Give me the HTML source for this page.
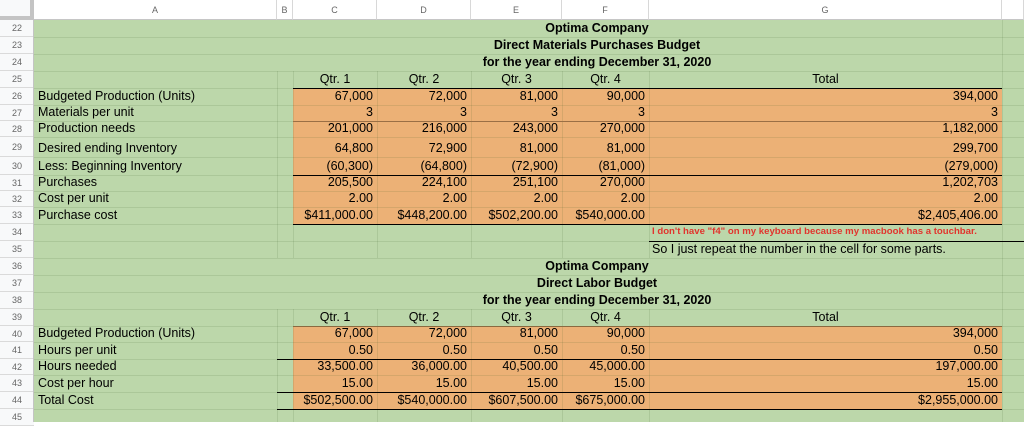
<!DOCTYPE html>
<html><head><meta charset="utf-8"><style>
*{margin:0;padding:0;box-sizing:border-box}
body{width:1024px;height:422px;overflow:hidden;background:#fff;font-family:"Liberation Sans",Arial,sans-serif;position:relative}
.a{position:absolute}
.hd{position:absolute;top:0;height:20px;background:#fff;border-right:1px solid #d8d8d8;border-bottom:1px solid #c6c6c6;font-size:9px;color:#666;text-align:center;line-height:20px}
.rn{position:absolute;left:0;width:34px;background:#f8f9fa;border-bottom:1px solid #dadada;font-size:9px;color:#666;text-align:center;display:flex;align-items:center;justify-content:center}
.row{position:absolute;left:0;width:1024px}
.c{position:absolute;top:0;bottom:0;font-size:12.5px;color:#000;white-space:nowrap;display:flex;align-items:flex-end;padding-bottom:1px;line-height:15px}
.A{left:38px;width:240px}
.C{left:293px;width:84px}
.D{left:377px;width:94px}
.E{left:471px;width:91px}
.F{left:562px;width:87px}
.G{left:649px;width:353px}
.r{justify-content:flex-end;padding-right:4px}
.m{justify-content:center}
.t{left:400px;width:394px;justify-content:center;font-weight:bold}
.vl{position:absolute;width:1px;background:rgba(60,90,40,0.13)}
.hl{position:absolute;left:34px;width:990px;height:1px;background:rgba(60,90,40,0.13)}
.bl{position:absolute;height:1px;background:#000}
</style></head><body>
<!-- backgrounds -->
<div class="a" style="left:34px;top:20px;width:990px;height:402px;background:#bcd7aa"></div>
<div class="a" style="left:293px;top:88px;width:709px;height:136px;background:#ecb176"></div>
<div class="a" style="left:293px;top:326px;width:709px;height:83px;background:#ecb176"></div>
<!-- horizontal gridlines -->
<div class="hl" style="top:37px"></div><div class="hl" style="top:54px"></div><div class="hl" style="top:71px"></div><div class="hl" style="top:88px"></div><div class="hl" style="top:105px"></div><div class="hl" style="top:121px"></div><div class="hl" style="top:137px"></div><div class="hl" style="top:157px"></div><div class="hl" style="top:175px"></div><div class="hl" style="top:191px"></div><div class="hl" style="top:207px"></div><div class="hl" style="top:224px"></div><div class="hl" style="top:241px"></div><div class="hl" style="top:258px"></div><div class="hl" style="top:275px"></div><div class="hl" style="top:292px"></div><div class="hl" style="top:309px"></div><div class="hl" style="top:326px"></div><div class="hl" style="top:342px"></div><div class="hl" style="top:359px"></div><div class="hl" style="top:375px"></div><div class="hl" style="top:392px"></div><div class="hl" style="top:409px"></div>
<!-- vertical gridlines -->
<div class="vl" style="left:277px;top:71px;height:187px"></div><div class="vl" style="left:277px;top:309px;height:113px"></div>
<div class="vl" style="left:293px;top:71px;height:187px"></div><div class="vl" style="left:293px;top:309px;height:113px"></div>
<div class="vl" style="left:377px;top:71px;height:187px"></div><div class="vl" style="left:377px;top:309px;height:113px"></div>
<div class="vl" style="left:471px;top:71px;height:187px"></div><div class="vl" style="left:471px;top:309px;height:113px"></div>
<div class="vl" style="left:562px;top:71px;height:187px"></div><div class="vl" style="left:562px;top:309px;height:113px"></div>
<div class="vl" style="left:649px;top:71px;height:187px"></div><div class="vl" style="left:649px;top:309px;height:113px"></div>
<div class="vl" style="left:1002px;top:20px;height:402px"></div>
<!-- borders -->
<div class="bl" style="left:293px;top:88px;width:709px"></div>
<div class="bl" style="left:293px;top:121px;width:709px;background:#9a6f45"></div>
<div class="bl" style="left:293px;top:175px;width:709px"></div>
<div class="bl" style="left:293px;top:224px;width:709px"></div>
<div class="bl" style="left:649px;top:241px;width:375px"></div>
<div class="bl" style="left:293px;top:326px;width:709px;background:#8a6a40"></div>
<div class="bl" style="left:277px;top:359px;width:725px"></div>
<div class="bl" style="left:277px;top:392px;width:725px"></div>
<div class="bl" style="left:277px;top:409px;width:725px"></div>
<!-- header -->
<div class="hd" style="left:0;width:34px;background:#f8f9fa;border-right:4px solid #c4c4c4;border-bottom:4px solid #c4c4c4"></div>
<div class="hd" style="left:34px;width:243px">A</div>
<div class="hd" style="left:277px;width:16px">B</div>
<div class="hd" style="left:293px;width:84px">C</div>
<div class="hd" style="left:377px;width:94px">D</div>
<div class="hd" style="left:471px;width:91px">E</div>
<div class="hd" style="left:562px;width:87px">F</div>
<div class="hd" style="left:649px;width:353px">G</div>
<div class="hd" style="left:1002px;width:22px"></div>
<!-- row numbers -->
<div class="rn" style="top:20px;height:17px">22</div><div class="rn" style="top:37px;height:17px">23</div><div class="rn" style="top:54px;height:17px">24</div><div class="rn" style="top:71px;height:17px">25</div><div class="rn" style="top:88px;height:17px">26</div><div class="rn" style="top:105px;height:16px">27</div><div class="rn" style="top:121px;height:16px">28</div><div class="rn" style="top:137px;height:20px">29</div><div class="rn" style="top:157px;height:18px">30</div><div class="rn" style="top:175px;height:16px">31</div><div class="rn" style="top:191px;height:16px">32</div><div class="rn" style="top:207px;height:17px">33</div><div class="rn" style="top:224px;height:17px">34</div><div class="rn" style="top:241px;height:17px">35</div><div class="rn" style="top:258px;height:17px">36</div><div class="rn" style="top:275px;height:17px">37</div><div class="rn" style="top:292px;height:17px">38</div><div class="rn" style="top:309px;height:17px">39</div><div class="rn" style="top:326px;height:16px">40</div><div class="rn" style="top:342px;height:17px">41</div><div class="rn" style="top:359px;height:16px">42</div><div class="rn" style="top:375px;height:17px">43</div><div class="rn" style="top:392px;height:17px">44</div><div class="rn" style="top:409px;height:17px">45</div>
<div class="a" style="left:33px;top:20px;width:1px;height:402px;background:#c4c4c4"></div>

<!-- Table 1 -->
<div class="row" style="top:20px;height:17px"><div class="c t">Optima Company</div></div>
<div class="row" style="top:37px;height:17px"><div class="c t">Direct Materials Purchases Budget</div></div>
<div class="row" style="top:54px;height:17px"><div class="c t">for the year ending December 31, 2020</div></div>
<div class="row" style="top:71px;height:17px"><div class="c C m">Qtr. 1</div><div class="c D m">Qtr. 2</div><div class="c E m">Qtr. 3</div><div class="c F m">Qtr. 4</div><div class="c G m">Total</div></div>
<div class="row" style="top:88px;height:17px"><div class="c A">Budgeted Production (Units)</div><div class="c C r">67,000</div><div class="c D r">72,000</div><div class="c E r">81,000</div><div class="c F r">90,000</div><div class="c G r">394,000</div></div>
<div class="row" style="top:105px;height:16px"><div class="c A">Materials per unit</div><div class="c C r">3</div><div class="c D r">3</div><div class="c E r">3</div><div class="c F r">3</div><div class="c G r">3</div></div>
<div class="row" style="top:121px;height:16px"><div class="c A">Production needs</div><div class="c C r">201,000</div><div class="c D r">216,000</div><div class="c E r">243,000</div><div class="c F r">270,000</div><div class="c G r">1,182,000</div></div>
<div class="row" style="top:137px;height:20px"><div class="c A">Desired ending Inventory</div><div class="c C r">64,800</div><div class="c D r">72,900</div><div class="c E r">81,000</div><div class="c F r">81,000</div><div class="c G r">299,700</div></div>
<div class="row" style="top:157px;height:18px"><div class="c A">Less: Beginning Inventory</div><div class="c C r">(60,300)</div><div class="c D r">(64,800)</div><div class="c E r">(72,900)</div><div class="c F r">(81,000)</div><div class="c G r">(279,000)</div></div>
<div class="row" style="top:175px;height:16px"><div class="c A">Purchases</div><div class="c C r">205,500</div><div class="c D r">224,100</div><div class="c E r">251,100</div><div class="c F r">270,000</div><div class="c G r">1,202,703</div></div>
<div class="row" style="top:191px;height:16px"><div class="c A">Cost per unit</div><div class="c C r">2.00</div><div class="c D r">2.00</div><div class="c E r">2.00</div><div class="c F r">2.00</div><div class="c G r">2.00</div></div>
<div class="row" style="top:207px;height:17px"><div class="c A">Purchase cost</div><div class="c C r">$411,000.00</div><div class="c D r">$448,200.00</div><div class="c E r">$502,200.00</div><div class="c F r">$540,000.00</div><div class="c G r">$2,405,406.00</div></div>
<div class="row" style="top:224px;height:17px"><div class="c" style="left:652px;font-size:9.6px;font-weight:bold;color:#e2342d;padding-bottom:2px">I don't have "f4" on my keyboard because my macbook has a touchbar.</div></div>
<div class="row" style="top:241px;height:17px"><div class="c" style="left:652px">So I just repeat the number in the cell for some parts.</div></div>

<!-- Table 2 -->
<div class="row" style="top:258px;height:17px"><div class="c t">Optima Company</div></div>
<div class="row" style="top:275px;height:17px"><div class="c t">Direct Labor Budget</div></div>
<div class="row" style="top:292px;height:17px"><div class="c t">for the year ending December 31, 2020</div></div>
<div class="row" style="top:309px;height:17px"><div class="c C m">Qtr. 1</div><div class="c D m">Qtr. 2</div><div class="c E m">Qtr. 3</div><div class="c F m">Qtr. 4</div><div class="c G m">Total</div></div>
<div class="row" style="top:326px;height:16px"><div class="c A">Budgeted Production (Units)</div><div class="c C r">67,000</div><div class="c D r">72,000</div><div class="c E r">81,000</div><div class="c F r">90,000</div><div class="c G r">394,000</div></div>
<div class="row" style="top:342px;height:17px"><div class="c A">Hours per unit</div><div class="c C r">0.50</div><div class="c D r">0.50</div><div class="c E r">0.50</div><div class="c F r">0.50</div><div class="c G r">0.50</div></div>
<div class="row" style="top:359px;height:16px"><div class="c A">Hours needed</div><div class="c C r">33,500.00</div><div class="c D r">36,000.00</div><div class="c E r">40,500.00</div><div class="c F r">45,000.00</div><div class="c G r">197,000.00</div></div>
<div class="row" style="top:375px;height:17px"><div class="c A">Cost per hour</div><div class="c C r">15.00</div><div class="c D r">15.00</div><div class="c E r">15.00</div><div class="c F r">15.00</div><div class="c G r">15.00</div></div>
<div class="row" style="top:392px;height:17px"><div class="c A">Total Cost</div><div class="c C r">$502,500.00</div><div class="c D r">$540,000.00</div><div class="c E r">$607,500.00</div><div class="c F r">$675,000.00</div><div class="c G r">$2,955,000.00</div></div>
</body></html>
